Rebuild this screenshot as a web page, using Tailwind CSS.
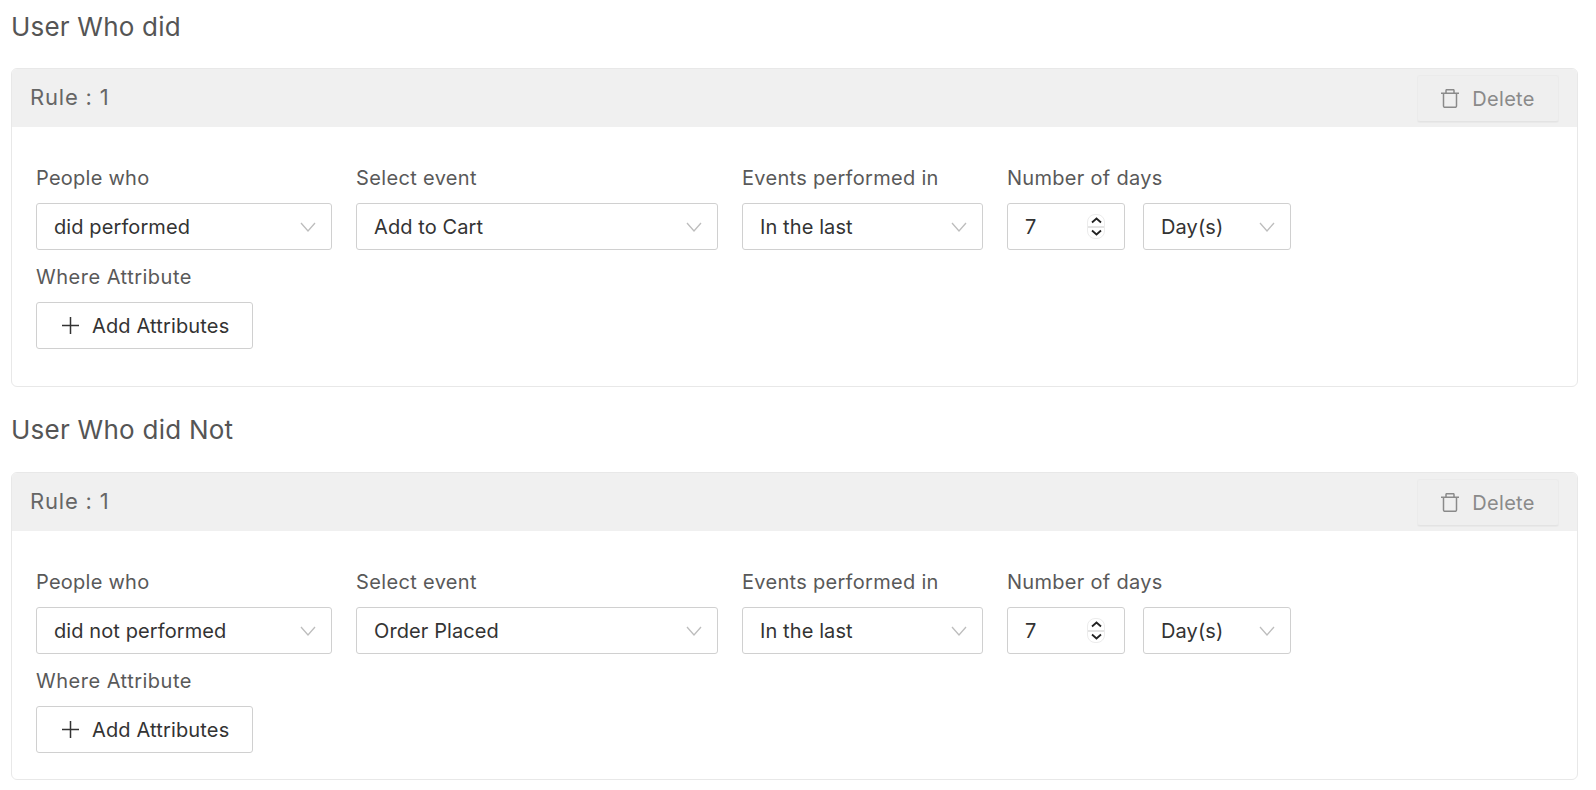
<!DOCTYPE html>
<html>
  <head>
    <meta charset="utf-8">
    <script src="https://cdn.jsdelivr.net/npm/@tailwindcss/browser@4"></script>
  </head>
  <body class="bg-white font-['Inter',sans-serif] overflow-hidden">
    <div class="pl-[11px] pr-[18px] pt-[9px]">
      <h2 class="h-[35px] leading-[35px] text-[26px] tracking-[0.2px] text-[#555]">User Who did</h2>
      <div class="mt-[24px] h-[319px] border border-[#e8e8e8] rounded-[6px] overflow-hidden">
        <div class="h-[58px] bg-[#f0f0f0] flex items-center justify-between pl-[18px] pr-[18px]">
          <span class="mb-[2px] text-[22px] tracking-[0.8px] text-[#666]">Rule : 1</span>
          <button class="mt-[1px] w-[142px] h-[47px] bg-[#efefef] border border-[#ebebeb] border-b-[#e3e3e3] shadow-[0_1px_1px_rgba(0,0,0,0.03)] rounded-[3px] flex items-center justify-center gap-[13px] text-[20px] tracking-[0.3px] text-[#8a8a8a]">
            <svg width="18" height="19" viewBox="0 0 18 19" fill="none" stroke="#8a8a8a" stroke-width="1.5"><path d="M0 4.200h18M5 4.200V1.500q0-.8.8-.8h6.400q.8 0 .8.8v2.700M2.500 4.200v12.800q0 1.300 1.300 1.300h10.400q1.300 0 1.300-1.300V4.200"/></svg>
            Delete
          </button>
        </div>
        <div class="pl-[24px] pt-[36px]">
          <div class="flex">
            <div class="w-[320px]">
              <div class="h-[30px] leading-[30px] text-[20px] tracking-[0.25px] text-[#595959]">People who</div>
              <div class="mt-[10px] w-[296px] h-[47px] border border-[#d0d0d0] rounded-[3px] flex items-center justify-between pl-[17px] pr-[15px] text-[20px] tracking-[0.1px] text-[#333]">did performed
                <svg width="16" height="10" viewBox="0 0 16 10" fill="none" stroke="#bdbdbd" stroke-width="1.300"><path d="M1 1l7 8 7-8"/></svg>
              </div>
            </div>
            <div class="w-[386px]">
              <div class="h-[30px] leading-[30px] text-[20px] tracking-[0.35px] text-[#595959]">Select event</div>
              <div class="mt-[10px] w-[362px] h-[47px] border border-[#d0d0d0] rounded-[3px] flex items-center justify-between pl-[17px] pr-[15px] text-[20px] tracking-[0.1px] text-[#333]">Add to Cart
                <svg width="16" height="10" viewBox="0 0 16 10" fill="none" stroke="#bdbdbd" stroke-width="1.300"><path d="M1 1l7 8 7-8"/></svg>
              </div>
            </div>
            <div class="w-[265px]">
              <div class="h-[30px] leading-[30px] text-[20px] tracking-[0.3px] text-[#595959]">Events performed in</div>
              <div class="mt-[10px] w-[241px] h-[47px] border border-[#d0d0d0] rounded-[3px] flex items-center justify-between pl-[17px] pr-[15px] text-[20px] tracking-[0.1px] text-[#333]">In the last
                <svg width="16" height="10" viewBox="0 0 16 10" fill="none" stroke="#bdbdbd" stroke-width="1.300"><path d="M1 1l7 8 7-8"/></svg>
              </div>
            </div>
            <div class="w-[136px]">
              <div class="h-[30px] leading-[30px] text-[20px] tracking-[0.3px] text-[#595959] whitespace-nowrap">Number of days</div>
              <div class="mt-[10px] w-[118px] h-[47px] border border-[#d0d0d0] rounded-[3px] flex items-center justify-between pl-[17px] pr-[19px] text-[20px] text-[#333]">7
                <div class="w-[18px] h-[25px] border border-[#ececec] rounded-[8px] flex flex-col items-center justify-between py-[2px]">
                  <svg width="11" height="7" viewBox="0 0 11 7" fill="none" stroke="#222" stroke-width="1.800"><path d="M1 5.500l4.500-4 4.500 4"/></svg>
                  <div class="w-full h-[2px] bg-[#e4e4e4]"></div>
                  <svg width="11" height="7" viewBox="0 0 11 7" fill="none" stroke="#222" stroke-width="1.800"><path d="M1 1.500l4.500 4 4.500-4"/></svg>
                </div>
              </div>
            </div>
            <div class="w-[148px] pt-[40px]">
              <div class="h-[47px] border border-[#d0d0d0] rounded-[3px] flex items-center justify-between pl-[17px] pr-[15px] text-[20px] tracking-[0.1px] text-[#333]">Day(s)
                <svg width="16" height="10" viewBox="0 0 16 10" fill="none" stroke="#bdbdbd" stroke-width="1.300"><path d="M1 1l7 8 7-8"/></svg>
              </div>
            </div>
          </div>
          <div class="mt-[12px] h-[30px] leading-[30px] text-[20px] tracking-[0.5px] text-[#595959]">Where Attribute</div>
          <button class="mt-[10px] w-[217px] h-[47px] border border-[#d0d0d0] rounded-[3px] flex items-center pl-[25px] gap-[13px] text-[20px] tracking-[0.15px] text-[#333]">
            <svg width="17" height="17" viewBox="0 0 17 17" fill="none" stroke="#333" stroke-width="1.500"><path d="M8.500 0v17M0 8.500h17"/></svg>
            Add Attributes
          </button>
        </div>
      </div>

      <h2 class="mt-[25px] h-[35px] leading-[35px] text-[26px] tracking-[0.25px] text-[#555]">User Who did Not</h2>
      <div class="mt-[25px] h-[308px] border border-[#e8e8e8] rounded-[6px] overflow-hidden">
        <div class="h-[58px] bg-[#f0f0f0] flex items-center justify-between pl-[18px] pr-[18px]">
          <span class="mb-[2px] text-[22px] tracking-[0.8px] text-[#666]">Rule : 1</span>
          <button class="mt-[1px] w-[142px] h-[47px] bg-[#efefef] border border-[#ebebeb] border-b-[#e3e3e3] shadow-[0_1px_1px_rgba(0,0,0,0.03)] rounded-[3px] flex items-center justify-center gap-[13px] text-[20px] tracking-[0.3px] text-[#8a8a8a]">
            <svg width="18" height="19" viewBox="0 0 18 19" fill="none" stroke="#8a8a8a" stroke-width="1.5"><path d="M0 4.200h18M5 4.200V1.500q0-.8.8-.8h6.400q.8 0 .8.8v2.700M2.500 4.200v12.800q0 1.300 1.300 1.300h10.400q1.300 0 1.300-1.300V4.200"/></svg>
            Delete
          </button>
        </div>
        <div class="pl-[24px] pt-[36px]">
          <div class="flex">
            <div class="w-[320px]">
              <div class="h-[30px] leading-[30px] text-[20px] tracking-[0.25px] text-[#595959]">People who</div>
              <div class="mt-[10px] w-[296px] h-[47px] border border-[#d0d0d0] rounded-[3px] flex items-center justify-between pl-[17px] pr-[15px] text-[20px] tracking-[0.1px] text-[#333]">did not performed
                <svg width="16" height="10" viewBox="0 0 16 10" fill="none" stroke="#bdbdbd" stroke-width="1.300"><path d="M1 1l7 8 7-8"/></svg>
              </div>
            </div>
            <div class="w-[386px]">
              <div class="h-[30px] leading-[30px] text-[20px] tracking-[0.35px] text-[#595959]">Select event</div>
              <div class="mt-[10px] w-[362px] h-[47px] border border-[#d0d0d0] rounded-[3px] flex items-center justify-between pl-[17px] pr-[15px] text-[20px] tracking-[0.1px] text-[#333]">Order Placed
                <svg width="16" height="10" viewBox="0 0 16 10" fill="none" stroke="#bdbdbd" stroke-width="1.300"><path d="M1 1l7 8 7-8"/></svg>
              </div>
            </div>
            <div class="w-[265px]">
              <div class="h-[30px] leading-[30px] text-[20px] tracking-[0.3px] text-[#595959]">Events performed in</div>
              <div class="mt-[10px] w-[241px] h-[47px] border border-[#d0d0d0] rounded-[3px] flex items-center justify-between pl-[17px] pr-[15px] text-[20px] tracking-[0.1px] text-[#333]">In the last
                <svg width="16" height="10" viewBox="0 0 16 10" fill="none" stroke="#bdbdbd" stroke-width="1.300"><path d="M1 1l7 8 7-8"/></svg>
              </div>
            </div>
            <div class="w-[136px]">
              <div class="h-[30px] leading-[30px] text-[20px] tracking-[0.3px] text-[#595959] whitespace-nowrap">Number of days</div>
              <div class="mt-[10px] w-[118px] h-[47px] border border-[#d0d0d0] rounded-[3px] flex items-center justify-between pl-[17px] pr-[19px] text-[20px] text-[#333]">7
                <div class="w-[18px] h-[25px] border border-[#ececec] rounded-[8px] flex flex-col items-center justify-between py-[2px]">
                  <svg width="11" height="7" viewBox="0 0 11 7" fill="none" stroke="#222" stroke-width="1.800"><path d="M1 5.500l4.500-4 4.500 4"/></svg>
                  <div class="w-full h-[2px] bg-[#e4e4e4]"></div>
                  <svg width="11" height="7" viewBox="0 0 11 7" fill="none" stroke="#222" stroke-width="1.800"><path d="M1 1.500l4.500 4 4.500-4"/></svg>
                </div>
              </div>
            </div>
            <div class="w-[148px] pt-[40px]">
              <div class="h-[47px] border border-[#d0d0d0] rounded-[3px] flex items-center justify-between pl-[17px] pr-[15px] text-[20px] tracking-[0.1px] text-[#333]">Day(s)
                <svg width="16" height="10" viewBox="0 0 16 10" fill="none" stroke="#bdbdbd" stroke-width="1.300"><path d="M1 1l7 8 7-8"/></svg>
              </div>
            </div>
          </div>
          <div class="mt-[12px] h-[30px] leading-[30px] text-[20px] tracking-[0.5px] text-[#595959]">Where Attribute</div>
          <button class="mt-[10px] w-[217px] h-[47px] border border-[#d0d0d0] rounded-[3px] flex items-center pl-[25px] gap-[13px] text-[20px] tracking-[0.15px] text-[#333]">
            <svg width="17" height="17" viewBox="0 0 17 17" fill="none" stroke="#333" stroke-width="1.500"><path d="M8.500 0v17M0 8.500h17"/></svg>
            Add Attributes
          </button>
        </div>
      </div>
    </div>
  </body>
</html>
